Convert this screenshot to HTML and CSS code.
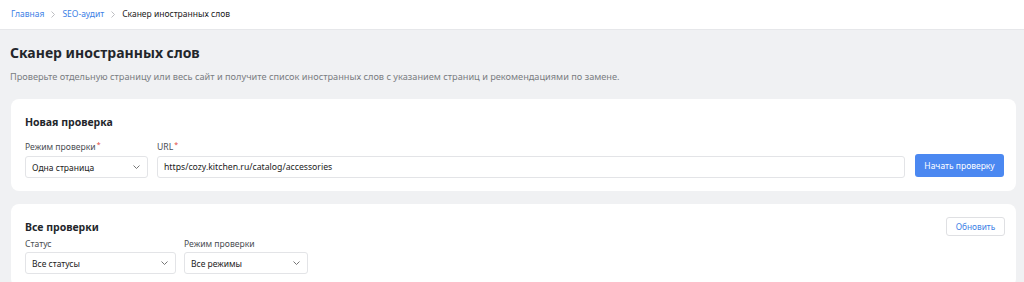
FILE: index.html
```html
<!DOCTYPE html>
<html lang="ru">
<head>
<meta charset="utf-8">
<title>Сканер иностранных слов</title>
<link rel="stylesheet" href="styles.css">
</head>
<body>
<header class="topbar">
  <nav class="crumbs">
    <a class="crumb-link" href="#">Главная</a>
    <svg class="sep" width="4" height="7" viewBox="0 0 4 7"><path d="M0.5 0.5l3 3-3 3" fill="none" stroke="#b5b7bb" stroke-width="0.9"/></svg>
    <a class="crumb-link" href="#">SEO-аудит</a>
    <svg class="sep" width="4" height="7" viewBox="0 0 4 7"><path d="M0.5 0.5l3 3-3 3" fill="none" stroke="#b5b7bb" stroke-width="0.9"/></svg>
    <span class="crumb-current">Сканер иностранных слов</span>
  </nav>
</header>
<main class="page">
  <h1 class="title">Сканер иностранных слов</h1>
  <p class="subtitle">Проверьте отдельную страницу или весь сайт и получите список иностранных слов с указанием страниц и рекомендациями по замене.</p>

  <section class="card card-new">
    <h2 class="card-title">Новая проверка</h2>
    <div class="form-row">
      <div class="field field-mode">
        <label class="label">Режим проверки<span class="req">*</span></label>
        <div class="select">
          <span>Одна страница</span>
          <svg class="chev" width="7" height="4" viewBox="0 0 7 4"><path d="M0.5 0.5l3 3 3-3" fill="none" stroke="#666" stroke-width="0.9"/></svg>
        </div>
      </div>
      <div class="field field-url">
        <label class="label">URL<span class="req">*</span></label>
        <div class="input">https/cozy.kitchen.ru/catalog/accessories</div>
      </div>
      <button class="btn-primary">Начать проверку</button>
    </div>
  </section>

  <section class="card card-list">
    <div class="list-head">
      <h2 class="card-title">Все проверки</h2>
      <button class="btn-outline">Обновить</button>
    </div>
    <div class="filters">
      <div class="field field-status">
        <label class="label">Статус</label>
        <div class="select">
          <span>Все статусы</span>
          <svg class="chev" width="7" height="4" viewBox="0 0 7 4"><path d="M0.5 0.5l3 3 3-3" fill="none" stroke="#666" stroke-width="0.9"/></svg>
        </div>
      </div>
      <div class="field field-filter-mode">
        <label class="label">Режим проверки</label>
        <div class="select">
          <span>Все режимы</span>
          <svg class="chev" width="7" height="4" viewBox="0 0 7 4"><path d="M0.5 0.5l3 3 3-3" fill="none" stroke="#666" stroke-width="0.9"/></svg>
        </div>
      </div>
    </div>
  </section>
</main>
</body>
</html>
```

FILE: styles.css
```css
* { box-sizing: border-box; }
html, body { margin: 0; padding: 0; }
body {
  background: #f0f1f3;
  font-family: "Noto Sans", "Open Sans", sans-serif;
  color: #222;
  overflow: hidden;
}
.topbar {
  background: #fff;
  height: 30px;
  border-bottom: 1px solid #e6e7ea;
  display: flex;
  align-items: center;
  padding-left: 11px;
  padding-bottom: 1px;
}
.crumbs {
  display: flex;
  align-items: center;
  gap: 7px;
  font-size: 8.5px;
  line-height: 12px;
}
.crumb-link { color: #3d7fe6; text-decoration: none; }
.sep { display: block; }
.crumb-current { color: #222; }
.page { padding: 0 8px 0 11px; }
.title {
  margin: 13px 0 0 -1px;
  font-size: 14px;
  font-weight: 700;
  color: #23262b;
  line-height: 19px;
}
.subtitle {
  margin: 8px 0 0 -1px;
  font-size: 9.2px;
  color: #7a7d82;
  line-height: 13px;
}
.card {
  background: #fff;
  border-radius: 8px;
  padding: 16px 12px 13px 14px;
}
.card-new { margin-top: 16px; }
.card-list { margin-top: 13px; padding-top: 13px; }
.card-title {
  margin: 0;
  font-size: 10.5px;
  font-weight: 700;
  line-height: 14px;
  color: #23262b;
}
.form-row {
  display: flex;
  align-items: flex-end;
  gap: 9px;
  margin-top: 12px;
}
.field { display: flex; flex-direction: column; }
.label {
  font-size: 8.6px;
  color: #4a4d52;
  line-height: 12px;
  margin-bottom: 3px;
}
.req { color: #e0463a; font-size: 7px; vertical-align: top; margin-left: 1px; line-height: 8px; }
.select, .input {
  height: 22px;
  border: 1px solid #e3e4e7;
  border-radius: 3px;
  background: #fff;
  font-size: 8.5px;
  color: #222;
  display: flex;
  align-items: center;
  padding: 0 7px 0 6px;
}
.input { font-size: 8.7px; }
.select { justify-content: space-between; }
.chev { display: block; }
.field-mode { width: 123px; }
.field-url { flex: 1; }
.btn-primary {
  width: 89px;
  height: 23px;
  margin-bottom: 1px;
  margin-left: 1px;
  background: #4b88f1;
  color: #fff;
  border: 0;
  border-radius: 3px;
  font-family: inherit;
  font-size: 8.5px;
  padding: 0;
}
.list-head {
  display: flex;
  justify-content: space-between;
  align-items: center;
  height: 19px;
}
.btn-outline {
  height: 19px;
  width: 59px;
  margin-right: -1px;
  background: #fff;
  border: 1px solid #dfe0e3;
  border-radius: 3px;
  color: #3d7fe6;
  font-family: inherit;
  font-size: 8.3px;
  padding: 0;
}
.filters {
  display: flex;
  gap: 8px;
  margin-top: 2px;
}
.filters .label { margin-bottom: 2px; }
.field-status { width: 151px; }
.field-filter-mode { width: 124px; }
```
